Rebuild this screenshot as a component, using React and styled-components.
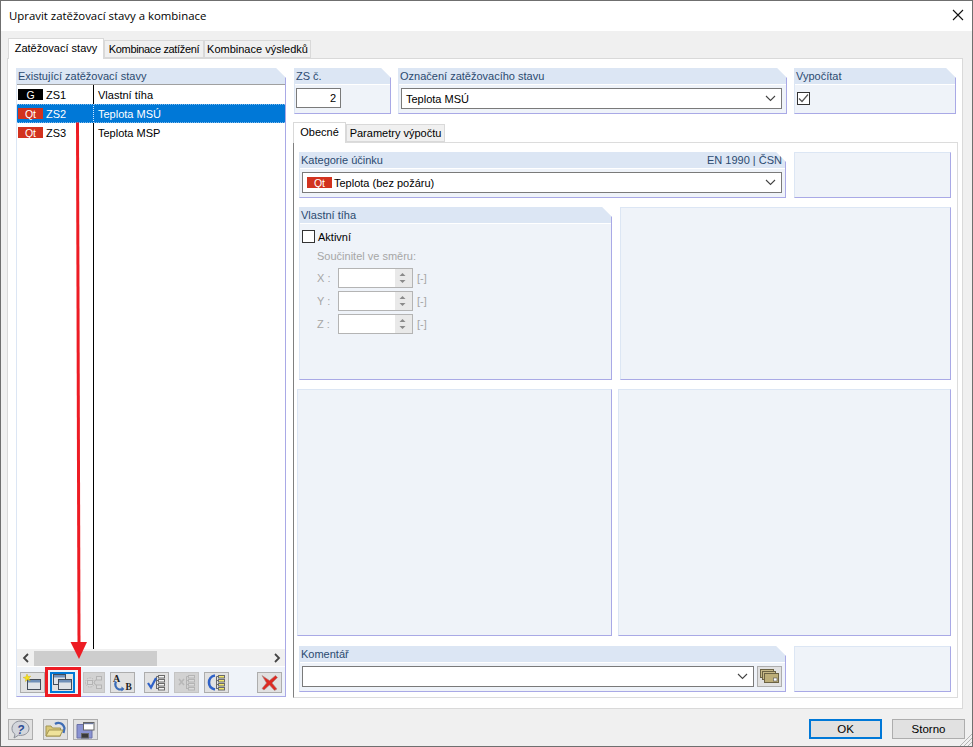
import React from "react";
import styled, { createGlobalStyle } from "styled-components";

const GlobalStyle = createGlobalStyle`
  html, body {
    margin: 0;
    padding: 0;
    background: #f0f0f0;
  }
  * {
    box-sizing: border-box;
  }
`;

const font = `"Liberation Sans", Arial, sans-serif`;

const Window = styled.div`
  position: relative;
  display: flex;
  flex-direction: column;
  width: 973px;
  height: 747px;
  border: 1px solid #6f6f6f;
  background: #f0f0f0;
  font-family: ${font};
  font-size: 11px;
  color: #000;
  white-space: nowrap;
  overflow: hidden;
`;

const TitleBar = styled.div`
  display: flex;
  align-items: center;
  justify-content: space-between;
  flex: none;
  height: 30px;
  padding: 0 6px 1px 8px;
  background: #fff;
  font-family: "Open Sans", sans-serif;
  font-size: 11.4px;
`;

const TabRow = styled.div`
  display: flex;
  align-items: flex-end;
  flex: none;
  height: 27px;
  padding-left: ${p => p.$left}px;
`;

const Tab = styled.div`
  display: flex;
  align-items: center;
  justify-content: center;
  position: relative;
  width: ${p => p.$w}px;
  height: ${p => (p.$active ? 21 : 18)}px;
  margin-bottom: ${p => (p.$active ? -1 : 0)}px;
  padding-bottom: ${p => (p.$active ? 2 : 0)}px;
  background: ${p => (p.$active ? "#fff" : "#f0f0f0")};
  border: 1px solid #d9d9d9;
  border-bottom: ${p => (p.$active ? "none" : "1px solid #d9d9d9")};
  letter-spacing: ${p => (p.$tight ? "-0.35px" : "normal")};
  z-index: ${p => (p.$active ? 1 : 0)};
`;

const TabPanel = styled.div`
  display: flex;
  gap: 7px;
  flex: none;
  height: 651px;
  margin: 0 9px 0 6px;
  padding: 9px 0 0 8px;
  background: #fff;
  border: 1px solid #d9d9d9;
`;

const Panel = styled.section`
  display: flex;
  flex-direction: column;
  flex: none;
  width: ${p => p.$w}px;
  height: ${p => p.$h}px;
  background: #eff3f9;
  border-left: 1px solid #dce6f4;
  border-right: 1px solid #a9a9e6;
  border-bottom: 1px solid #a9a9e6;
  clip-path: polygon(0 0, calc(100% - 10px) 0, 100% 10px, 100% 100%, 0 100%);
`;

const BlankPanel = styled.div`
  flex: none;
  width: ${p => p.$w}px;
  height: ${p => p.$h}px;
  background: #eff3f9;
  border: 1px solid #dce6f4;
  border-right-color: #a9a9e6;
  border-bottom-color: #a9a9e6;
`;

const PanelHeader = styled.div`
  display: flex;
  align-items: center;
  justify-content: space-between;
  flex: none;
  height: ${p => (p.$list ? 16 : 17)}px;
  padding: 0 3px ${p => (p.$list ? 0 : 1)}px 1px;
  background: #dce6f4;
  border-bottom: ${p => (p.$list ? "none" : "1px solid #fff")};
  color: #2b4a70;
`;

const ListHeaderLine = styled.div`
  flex: none;
  height: 1px;
  background: #a0a0a0;
`;

const ListBody = styled.div`
  display: flex;
  flex: 1;
  background: #fff;
`;

const KeyColumn = styled.div`
  flex: none;
  width: 77px;
  border-right: 1px solid #000;
`;

const NameColumn = styled.div`
  flex: 1;
`;

const KeyCell = styled.div`
  display: flex;
  align-items: center;
  gap: 3px;
  height: 19px;
  padding-left: 1px;
  margin-right: ${p => (p.$selected ? -1 : 0)}px;
  background: ${p => (p.$selected ? "#0078d7" : "transparent")};
  color: ${p => (p.$selected ? "#fff" : "#000")};
  border-right: ${p => (p.$selected ? "1px dotted #cfe6ff" : "none")};
  border-top: ${p => (p.$selected ? "1px dotted #7db8ea" : "none")};
  border-bottom: ${p => (p.$selected ? "1px dotted #7db8ea" : "none")};
`;

const NameCell = styled.div`
  display: flex;
  align-items: center;
  height: 19px;
  padding-left: 4px;
  background: ${p => (p.$selected ? "#0078d7" : "transparent")};
  color: ${p => (p.$selected ? "#fff" : "#000")};
  border-top: ${p => (p.$selected ? "1px dotted #7db8ea" : "none")};
  border-bottom: ${p => (p.$selected ? "1px dotted #7db8ea" : "none")};
`;

const Badge = styled.span`
  display: inline-flex;
  align-items: center;
  justify-content: center;
  flex: none;
  width: 25px;
  height: 11px;
  background: ${p => (p.$black ? "#000" : "#d2321e")};
  color: #fff;
  font-size: 10.5px;
`;

const ScrollBar = styled.div`
  display: flex;
  align-items: center;
  flex: none;
  height: 18px;
  padding-top: 1px;
  background: #f0f0f0;
  border-bottom: 1px solid #fff;
`;

const ScrollArrow = styled.div`
  display: flex;
  align-items: center;
  justify-content: center;
  flex: none;
  width: ${p => p.$w}px;
  height: 16px;
`;

const ScrollThumb = styled.div`
  flex: none;
  width: 123px;
  height: 15px;
  background: #cdcdcd;
`;

const ScrollTrack = styled.div`
  flex: 1;
`;

const Toolbar = styled.div`
  display: flex;
  align-items: flex-start;
  flex: none;
  height: 29px;
  padding: 5px 0 0 3px;
  background: #eff3f9;
`;

const ToolButton = styled.div`
  position: relative;
  display: flex;
  align-items: center;
  justify-content: center;
  flex: none;
  width: ${p => p.$w || 25}px;
  height: 21px;
  margin-left: ${p => p.$gap || 0}px;
  background: ${p => (p.$disabled ? "#d2d2d2" : "#e1e1e1")};
  border: 1px solid ${p => (p.$disabled ? "#c4c4c4" : "#adadad")};
`;

const FocusedButton = styled(ToolButton)`
  border: 2px solid #0078d7;

  &::after {
    content: "";
    position: absolute;
    left: -7px;
    right: -8px;
    top: -7px;
    bottom: -6px;
    border: 3px solid #ed1c24;
  }
`;

const RightColumn = styled.div`
  display: flex;
  flex-direction: column;
  flex: none;
  width: 665px;
`;

const TopRow = styled.div`
  display: flex;
  gap: 7px;
  flex: none;
  height: 46px;
  padding-left: 1px;
`;

const SubTabRow = styled.div`
  display: flex;
  align-items: flex-end;
  flex: none;
  height: 28px;
`;

const SubPanel = styled.div`
  display: flex;
  flex-direction: column;
  flex: none;
  height: 556px;
  padding: 9px 0 0 3px;
  background: #fff;
  border: 1px solid #dcdcdc;
  border-left-color: #808080;
`;

const PanelRow = styled.div`
  display: flex;
  gap: ${p => p.$gap || 8}px;
  flex: none;
  margin-bottom: ${p => p.$mb ?? 9}px;
  padding-left: ${p => (p.$flush ? 0 : 2)}px;
`;

const NumberBox = styled.div`
  display: flex;
  align-items: center;
  justify-content: flex-end;
  width: 45px;
  height: 20px;
  margin: 3px 0 0 1px;
  padding-right: 4px;
  background: #fff;
  border: 1px solid #7a7a7a;
`;

const SelectBox = styled.div`
  display: flex;
  align-items: center;
  gap: 2px;
  width: ${p => p.$w}px;
  height: 21px;
  margin: ${p => (p.$inRow ? "0" : "3px 0 0 2px")};
  padding: 0 5px 0 4px;
  background: #fff;
  border: 1px solid #7a7a7a;
`;

const SelectText = styled.span`
  flex: 1;
`;

const CheckBox = styled.div`
  display: flex;
  align-items: center;
  justify-content: center;
  flex: none;
  width: 13px;
  height: 13px;
  background: #fff;
  border: 1px solid #333;
`;

const CheckTop = styled.div`
  margin: 7px 0 0 2px;
`;

const ActiveRow = styled.div`
  display: flex;
  align-items: center;
  gap: 3px;
  margin: 6px 0 0 2px;
`;

const DisabledGroup = styled.div`
  display: flex;
  flex-direction: column;
  margin: 7px 0 0 17px;
  color: #a6a6a6;
`;

const DisabledTitle = styled.div`
  height: 15px;
  margin-bottom: 3px;
`;

const SpinRow = styled.div`
  display: flex;
  align-items: center;
  height: 20px;
  margin-bottom: 3px;
`;

const SpinLabel = styled.span`
  flex: none;
  width: 21px;
`;

const SpinBox = styled.div`
  display: flex;
  justify-content: flex-end;
  flex: none;
  width: 75px;
  height: 20px;
  background: #fff;
  border: 1px solid #b4b4b4;
`;

const SpinButtons = styled.div`
  display: flex;
  flex-direction: column;
  justify-content: center;
  gap: 2px;
  width: 17px;
  background: #e9e9e9;
`;

const SpinUnit = styled.span`
  margin-left: 4px;
`;

const CommentRow = styled.div`
  display: flex;
  gap: 3px;
  margin: 3px 0 0 2px;
`;

const BottomBar = styled.div`
  display: flex;
  flex: 1;
  align-items: flex-start;
  padding: 10px 7px 0 7px;
`;

const BottomSpacer = styled.div`
  flex: 1;
`;

const DialogButton = styled.div`
  display: flex;
  align-items: center;
  justify-content: center;
  width: 73px;
  height: 20px;
  margin-left: ${p => p.$gap || 0}px;
  background: #e1e1e1;
  border: ${p => (p.$focused ? "2px solid #0078d7" : "1px solid #adadad")};
  font-size: 11.5px;
`;

const ArrowOverlay = styled.svg`
  position: absolute;
  left: 67px;
  top: 120px;
`;

const Grip = styled.svg`
  position: absolute;
  right: 0;
  bottom: 0;
`;

const Chevron = () => (
  <svg width="11" height="7" viewBox="0 0 11 7">
    <path d="M1 1l4.5 4.5L10 1" fill="none" stroke="#444" strokeWidth="1.1" />
  </svg>
);

const CloseIcon = () => (
  <svg width="15" height="15" viewBox="0 0 15 15">
    <path d="M2 2l10 10M12 2L2 12" fill="none" stroke="#111" strokeWidth="1.1" />
  </svg>
);

const CheckMark = () => (
  <svg width="11" height="11" viewBox="0 0 11 11">
    <path d="M1 5.5l3 3L10 1.5" fill="none" stroke="#555" strokeWidth="1.2" />
  </svg>
);

const SpinArrow = ({ down }) => (
  <svg width="15" height="5" viewBox="0 0 15 5">
    <path d={down ? "M4.5 1h6L7.5 4z" : "M4.5 4h6L7.5 1z"} fill="#8a8a8a" />
  </svg>
);

const ScrollLeft = () => (
  <svg width="8" height="10" viewBox="0 0 8 10">
    <path d="M6 1L2 5l4 4" fill="none" stroke="#444" strokeWidth="1.8" />
  </svg>
);

const ScrollRight = () => (
  <svg width="8" height="10" viewBox="0 0 8 10">
    <path d="M2 1l4 4-4 4" fill="none" stroke="#444" strokeWidth="1.8" />
  </svg>
);

const WindowShape = ({ x, y, w, h }) => (
  <g>
    <rect x={x} y={y} width={w} height={h} fill="#dfe3e8" stroke="#444c58" />
    <rect x={x + 0.5} y={y + 0.5} width={w - 1} height="2.5" fill="#6f8fb8" />
  </g>
);

const NewIcon = () => (
  <svg width="19" height="17" viewBox="0 0 19 17">
    <WindowShape x={4.5} y={5.5} w={13} h={10} />
    <path d="M4 0l1 2.6 2.800-.4-1.900 2 1.300 2.500-2.600-1.200L2.400 7.500l.4-2.800L0 3.500l2.800-.6z" fill="#f5e11e" stroke="#c9a80a" strokeWidth=".4" />
  </svg>
);

const CopyIcon = () => (
  <svg width="19" height="17" viewBox="0 0 19 17">
    <WindowShape x={.5} y={.5} w={12} h={10} />
    <WindowShape x={5.5} y={5.5} w={13} h={10} />
  </svg>
);

const FlowIcon = () => (
  <svg width="20" height="17" viewBox="0 0 20 17" fill="#d8d8d8" stroke="#b4b4b4">
    <circle cx="6" cy="8.500" r="4.500" strokeDasharray="1.500 1" />
    <rect x="3.500" y="6.500" width="5" height="4" />
    <rect x="12.500" y="2.500" width="5" height="3.500" />
    <rect x="12.500" y="11" width="5" height="3.500" />
    <path d="M10 8.500l2-3M10 8.500l2 3" fill="none" />
  </svg>
);

const SwapIcon = () => (
  <svg width="23" height="19" viewBox="0 0 23 19">
    <text x="2" y="8.500" fontFamily="Liberation Serif, serif" fontWeight="700" fontSize="10" fill="#222">A</text>
    <text x="14.500" y="17" fontFamily="Liberation Serif, serif" fontWeight="700" fontSize="9.500" fill="#222">B</text>
    <path d="M5 8.500c-1.500 3-.5 7 3 8l3-.2" fill="none" stroke="#3a6cb8" strokeWidth="2.200" />
    <path d="M10.500 13.500v5l3-2.500z" fill="#3a6cb8" />
  </svg>
);

const TreeLines = ({ color, fill }) => (
  <g fill={fill} stroke={color}>
    <rect x="11.500" y="1.500" width="6" height="2.500" />
    <rect x="11.500" y="5.500" width="6" height="2.500" />
    <rect x="11.500" y="9.500" width="6" height="2.500" />
    <rect x="11.500" y="13.500" width="6" height="2.500" />
    <path d="M9.500 2.500v12.500M9.500 2.500h2M9.500 6.500h2M9.500 10.500h2M9.500 14.500h2" fill="none" />
  </g>
);

const CheckTreeIcon = () => (
  <svg width="19" height="17" viewBox="0 0 19 17">
    <TreeLines color="#6a6a6a" fill="#f3f3f3" />
    <path d="M1 9l3 4.500L9 4" fill="none" stroke="#2f62c8" strokeWidth="2.200" />
  </svg>
);

const CrossTreeIcon = () => (
  <svg width="19" height="17" viewBox="0 0 19 17">
    <TreeLines color="#b4b4b4" fill="#dadada" />
    <path d="M2 5l5 6M7 5l-5 6" fill="none" stroke="#b8b8b8" strokeWidth="1.600" />
  </svg>
);

const BraceTreeIcon = () => (
  <svg width="19" height="17" viewBox="0 0 19 17">
    <TreeLines color="#6a6a6a" fill="#f4e86a" />
    <path d="M8 1.500C4 2 2 5.500 2 8.500s2 6 6 7" fill="none" stroke="#2f62c8" strokeWidth="2.600" />
  </svg>
);

const DeleteIcon = () => (
  <svg width="19" height="17" viewBox="0 0 19 17">
    <path d="M2 1.500l7.500 5 6-5 2 2-5.500 5.500 5 6-2.500 1.500L9.500 11 4 16l-2-1.500L6.500 9z" fill="#dd2a22" stroke="#a88a88" strokeWidth=".6" />
  </svg>
);

const HelpIcon = () => (
  <svg width="21" height="19" viewBox="0 0 21 19">
    <path d="M10.500 1C5.500 1 2 4.400 2 8.600c0 2.400 1.200 4.400 3 5.800L4 18l4.500-2.800c.7.100 1.300.2 2 .2 5 0 8.500-3 8.500-6.800S15.500 1 10.500 1z" fill="#d3d6dc" stroke="#8b8f98" />
    <text x="7" y="13.500" fontFamily="Liberation Sans, sans-serif" fontStyle="italic" fontWeight="700" fontSize="12" fill="#2f4f96">?</text>
  </svg>
);

const OpenIcon = () => (
  <svg width="21" height="18" viewBox="0 0 21 18">
    <path d="M10 3c3.500-2.500 8-1 9.500 4l-1 5" fill="none" stroke="#3f6db5" strokeWidth="2.200" />
    <path d="M1 5h5l1.500 2h8v8H1z" fill="#d9c878" stroke="#a39552" />
    <path d="M1 15l3-6h14l-3 6z" fill="#efe29a" stroke="#a39552" />
  </svg>
);

const SaveIcon = () => (
  <svg width="19" height="18" viewBox="0 0 19 18">
    <path d="M1 3.500h15v13.500H1z" fill="#8a93d2" stroke="#6a71a8" />
    <rect x="5.500" y="12.500" width="7" height="4.500" fill="#3a3a3a" stroke="#666" />
    <rect x="7.500" y="1.500" width="10.500" height="7.500" fill="#fff" stroke="#666" />
    <rect x="8" y="2" width="9.500" height="1.200" fill="#6d7a9e" />
  </svg>
);

const StackIcon = () => (
  <svg width="19" height="15" viewBox="0 0 19 15">
    <rect x=".5" y=".5" width="13" height="8" fill="#c7b988" stroke="#6c6344" />
    <rect x="2.500" y="2.500" width="13" height="8" fill="#c7b988" stroke="#6c6344" />
    <rect x="4.500" y="4.500" width="14" height="9" fill="#bdae78" stroke="#6c6344" />
    <rect x="13.500" y="9" width="3.500" height="3" fill="#fff" stroke="#555" strokeWidth=".6" />
  </svg>
);

function SpinField({ label }) {
  return (
    <SpinRow>
      <SpinLabel>{label} :</SpinLabel>
      <SpinBox>
        <SpinButtons>
          <SpinArrow />
          <SpinArrow down />
        </SpinButtons>
      </SpinBox>
      <SpinUnit>[-]</SpinUnit>
    </SpinRow>
  );
}

export default function App() {
  return (
    <Window>
      <GlobalStyle />
      <TitleBar>
        <span>Upravit zatěžovací stavy a kombinace</span>
        <CloseIcon />
      </TitleBar>

      <TabRow $left={7}>
        <Tab $w={96} $active>Zatěžovací stavy</Tab>
        <Tab $w={100} $tight>Kombinace zatížení</Tab>
        <Tab $w={107}>Kombinace výsledků</Tab>
      </TabRow>

      <TabPanel>
        <Panel $w={270} $h={629}>
          <PanelHeader $list>Existující zatěžovací stavy</PanelHeader>
          <ListHeaderLine />
          <ListBody>
            <KeyColumn>
              <KeyCell><Badge $black>G</Badge>ZS1</KeyCell>
              <KeyCell $selected><Badge>Qt</Badge>ZS2</KeyCell>
              <KeyCell><Badge>Qt</Badge>ZS3</KeyCell>
            </KeyColumn>
            <NameColumn>
              <NameCell>Vlastní tíha</NameCell>
              <NameCell $selected>Teplota MSÚ</NameCell>
              <NameCell>Teplota MSP</NameCell>
            </NameColumn>
          </ListBody>
          <ScrollBar>
            <ScrollArrow $w={17}><ScrollLeft /></ScrollArrow>
            <ScrollThumb />
            <ScrollTrack />
            <ScrollArrow $w={17}><ScrollRight /></ScrollArrow>
          </ScrollBar>
          <Toolbar>
            <ToolButton><NewIcon /></ToolButton>
            <FocusedButton $gap={5}><CopyIcon /></FocusedButton>
            <ToolButton $w={22} $gap={8} $disabled><FlowIcon /></ToolButton>
            <ToolButton $gap={5}><SwapIcon /></ToolButton>
            <ToolButton $gap={9}><CheckTreeIcon /></ToolButton>
            <ToolButton $gap={5} $disabled><CrossTreeIcon /></ToolButton>
            <ToolButton $gap={5}><BraceTreeIcon /></ToolButton>
            <ToolButton $gap={28}><DeleteIcon /></ToolButton>
          </Toolbar>
        </Panel>

        <RightColumn>
          <TopRow>
            <Panel $w={97} $h={46}>
              <PanelHeader>ZS č.</PanelHeader>
              <NumberBox>2</NumberBox>
            </Panel>
            <Panel $w={389} $h={46}>
              <PanelHeader>Označení zatěžovacího stavu</PanelHeader>
              <SelectBox $w={381}><SelectText>Teplota MSÚ</SelectText><Chevron /></SelectBox>
            </Panel>
            <Panel $w={162} $h={46}>
              <PanelHeader>Vypočítat</PanelHeader>
              <CheckTop><CheckBox><CheckMark /></CheckBox></CheckTop>
            </Panel>
          </TopRow>

          <SubTabRow>
            <Tab $w={53} $active>Obecné</Tab>
            <Tab $w={99}>Parametry výpočtu</Tab>
          </SubTabRow>

          <SubPanel>
            <PanelRow>
              <Panel $w={487} $h={46}>
                <PanelHeader>
                  <span>Kategorie účinku</span>
                  <span>EN 1990 | ČSN</span>
                </PanelHeader>
                <SelectBox $w={480}>
                  <Badge>Qt</Badge>
                  <SelectText>Teplota (bez požáru)</SelectText>
                  <Chevron />
                </SelectBox>
              </Panel>
              <BlankPanel $w={157} $h={46} />
            </PanelRow>

            <PanelRow>
              <Panel $w={313} $h={173}>
                <PanelHeader>Vlastní tíha</PanelHeader>
                <ActiveRow>
                  <CheckBox />
                  <span>Aktivní</span>
                </ActiveRow>
                <DisabledGroup>
                  <DisabledTitle>Součinitel ve směru:</DisabledTitle>
                  <SpinField label="X" />
                  <SpinField label="Y" />
                  <SpinField label="Z" />
                </DisabledGroup>
              </Panel>
              <BlankPanel $w={331} $h={173} />
            </PanelRow>

            <PanelRow $flush $gap={6} $mb={10}>
              <BlankPanel $w={315} $h={247} />
              <BlankPanel $w={333} $h={247} />
            </PanelRow>

            <PanelRow $mb={0}>
              <Panel $w={487} $h={46}>
                <PanelHeader>Komentář</PanelHeader>
                <CommentRow>
                  <SelectBox $w={452} $inRow><SelectText /><Chevron /></SelectBox>
                  <ToolButton><StackIcon /></ToolButton>
                </CommentRow>
              </Panel>
              <BlankPanel $w={157} $h={46} />
            </PanelRow>
          </SubPanel>
        </RightColumn>
      </TabPanel>

      <BottomBar>
        <ToolButton><HelpIcon /></ToolButton>
        <ToolButton $gap={10}><OpenIcon /></ToolButton>
        <ToolButton $gap={5}><SaveIcon /></ToolButton>
        <BottomSpacer />
        <DialogButton $focused>OK</DialogButton>
        <DialogButton $gap={10}>Storno</DialogButton>
      </BottomBar>

      <ArrowOverlay width="22" height="540" viewBox="0 0 22 540">
        <path d="M9.500 1.500L11 524" fill="none" stroke="#ed1c24" strokeWidth="3" />
        <path d="M2.500 521H19L11 538z" fill="#ed1c24" />
      </ArrowOverlay>

      <Grip width="13" height="13" viewBox="0 0 13 13">
        <path d="M13 1L1 13M13 5L5 13M13 9L9 13" fill="none" stroke="#b5b5b5" />
      </Grip>
    </Window>
  );
}
